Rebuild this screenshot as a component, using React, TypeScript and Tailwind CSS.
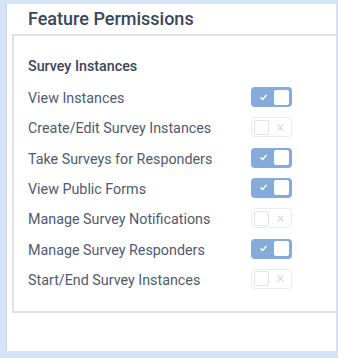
import React from "react";

const rows: { label: string; on: boolean }[] = [
  { label: "View Instances", on: true },
  { label: "Create/Edit Survey Instances", on: false },
  { label: "Take Surveys for Responders", on: true },
  { label: "View Public Forms", on: true },
  { label: "Manage Survey Notifications", on: false },
  { label: "Manage Survey Responders", on: true },
  { label: "Start/End Survey Instances", on: false },
];

function Toggle({ on }: { on: boolean }) {
  if (on) {
    return (
      <div className="mt-[4px] w-[41px] h-[20px] rounded-[4px] bg-[#84abd9] flex items-center justify-between pl-[9px] pr-[3px]">
        <svg width="7" height="7" viewBox="0 0 8 8">
          <path d="M1 4.3 L3 6.4 L7 1.4" stroke="white" strokeWidth="1.6" fill="none" strokeLinecap="round" strokeLinejoin="round" />
        </svg>
        <div className="w-[15px] h-[15px] rounded-[2px] bg-white" />
      </div>
    );
  }
  return (
    <div className="mt-[4px] w-[41px] h-[20px] rounded-[4px] bg-white border border-[#e8eaed] flex items-center justify-between pl-[2px] pr-[7px]">
      <div className="w-[15px] h-[15px] rounded-[2px] bg-white border border-[#e2e4e8]" />
      <svg width="7" height="7" viewBox="0 0 8 8">
        <path d="M1 1 L7 7 M7 1 L1 7" stroke="#d3d6db" strokeWidth="1.3" strokeLinecap="round" />
      </svg>
    </div>
  );
}

export default function App() {
  return (
    <div
      className="w-[338px] h-[358px] bg-[#d6e2f5] pt-[4px] pl-[6px] pr-[2px] pb-[7px]"
      style={{ fontFamily: "Roboto, 'Noto Sans', sans-serif" }}
    >
      <div className="w-full h-full bg-white overflow-hidden border-l border-[#c9d3e2]">
        <div className="h-[30px] pl-[21px] pt-[3px] text-[18px] leading-[24px] font-medium text-[#3a4659]">
          Feature Permissions
        </div>
        <div className="ml-[5px] w-[360px] border-2 border-[#dfe3e8] pt-[20px] pl-[14px] pb-[16px]">
          <div className="text-[14.3px] leading-[20px] font-medium text-[#3a4659]">Survey Instances</div>
          <div className="mt-[7px] flex flex-col">
            {rows.map((r) => (
              <div key={r.label} className="h-[30.33px] grid grid-cols-[223px_auto] items-start">
                <div className="h-[30px] flex items-center text-[14.3px] leading-[20px] text-[#4f5b6d]">{r.label}</div>
                <Toggle on={r.on} />
              </div>
            ))}
          </div>
        </div>
      </div>
    </div>
  );
}
